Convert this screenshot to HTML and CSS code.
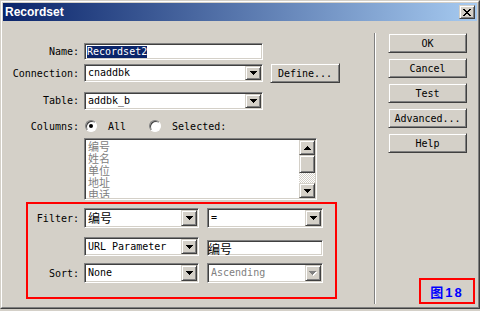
FILE: index.html
```html
<!DOCTYPE html>
<html lang="zh">

<head>
    <meta charset="UTF-8">
    <title>Recordset</title>
    <link rel="stylesheet" href="styles.css">
</head>

<body>
    <div class="window">
        <div class="window-inner">
            <div class="titlebar">
                <span class="title">Recordset</span>
                <span class="close raised">
                    <svg width="8" height="7" viewBox="0 0 8 7" shape-rendering="crispEdges">
                        <path d="M0 0h2v1H0zM6 0h2v1H6zM1 1h2v1H1zM5 1h2v1H5zM2 2h4v1H2zM3 3h2v1H3zM2 4h4v1H2zM1 5h2v1H1zM5 5h2v1H5zM0 6h2v1H0zM6 6h2v1H6z" fill="#000" />
                    </svg>
                </span>
            </div>

            <div class="body">
                <div class="form">
                    <div class="row row-name">
                        <label class="lbl">Name:</label>
                        <div class="field w-name"><span class="selected">Recordset2</span></div>
                    </div>

                    <div class="row row-conn">
                        <label class="lbl">Connection:</label>
                        <div class="combo w-wide">
                            <span class="val">cnaddbk</span>
                            <span class="drop raised"><svg width="7" height="4" viewBox="0 0 7 4" shape-rendering="crispEdges"><path d="M0 0h7v1H0zM1 1h5v1H1zM2 2h3v1H2zM3 3h1v1H3z" fill="#000" /></svg></span>
                        </div>
                        <div class="btn raised define">Define...</div>
                    </div>

                    <div class="row row-table">
                        <label class="lbl">Table:</label>
                        <div class="combo w-wide">
                            <span class="val">addbk_b</span>
                            <span class="drop raised"><svg width="7" height="4" viewBox="0 0 7 4" shape-rendering="crispEdges"><path d="M0 0h7v1H0zM1 1h5v1H1zM2 2h3v1H2zM3 3h1v1H3z" fill="#000" /></svg></span>
                        </div>
                    </div>

                    <div class="row row-cols">
                        <label class="lbl">Columns:</label>
                        <span class="radio checked"></span>
                        <span class="radio-text all">All</span>
                        <span class="radio second"></span>
                        <span class="radio-text">Selected:</span>
                    </div>

                    <div class="listbox">
                        <div class="items">
                            <div>编号</div>
                            <div>姓名</div>
                            <div>单位</div>
                            <div>地址</div>
                            <div>电话</div>
                        </div>
                        <div class="scroll">
                            <span class="sb-btn raised up"><svg width="7" height="4" viewBox="0 0 7 4" shape-rendering="crispEdges"><path d="M3 0h1v1H3zM2 1h3v1H2zM1 2h5v1H1zM0 3h7v1H0z" fill="#000" /></svg></span>
                            <span class="thumb raised"></span>
                            <span class="track"></span>
                            <span class="sb-btn raised down"><svg width="7" height="4" viewBox="0 0 7 4" shape-rendering="crispEdges"><path d="M0 0h7v1H0zM1 1h5v1H1zM2 2h3v1H2zM3 3h1v1H3z" fill="#000" /></svg></span>
                        </div>
                    </div>

                    <div class="filter-box">
                        <div class="row f-row1">
                            <label class="lbl small">Filter:</label>
                            <div class="combo w-half">
                                <span class="val cjk">编号</span>
                                <span class="drop raised"><svg width="7" height="4" viewBox="0 0 7 4" shape-rendering="crispEdges"><path d="M0 0h7v1H0zM1 1h5v1H1zM2 2h3v1H2zM3 3h1v1H3z" fill="#000" /></svg></span>
                            </div>
                            <div class="combo w-half2">
                                <span class="val">=</span>
                                <span class="drop raised"><svg width="7" height="4" viewBox="0 0 7 4" shape-rendering="crispEdges"><path d="M0 0h7v1H0zM1 1h5v1H1zM2 2h3v1H2zM3 3h1v1H3z" fill="#000" /></svg></span>
                            </div>
                        </div>

                        <div class="row f-row2">
                            <span class="lbl small"></span>
                            <div class="combo w-half">
                                <span class="val">URL Parameter</span>
                                <span class="drop raised"><svg width="7" height="4" viewBox="0 0 7 4" shape-rendering="crispEdges"><path d="M0 0h7v1H0zM1 1h5v1H1zM2 2h3v1H2zM3 3h1v1H3z" fill="#000" /></svg></span>
                            </div>
                            <div class="field w-half2 param"><span class="cjk">编号</span></div>
                        </div>

                        <div class="row f-row3">
                            <label class="lbl small">Sort:</label>
                            <div class="combo w-half">
                                <span class="val">None</span>
                                <span class="drop raised"><svg width="7" height="4" viewBox="0 0 7 4" shape-rendering="crispEdges"><path d="M0 0h7v1H0zM1 1h5v1H1zM2 2h3v1H2zM3 3h1v1H3z" fill="#000" /></svg></span>
                            </div>
                            <div class="combo w-half2 disabled">
                                <span class="val">Ascending</span>
                                <span class="drop raised"><svg width="8" height="5" viewBox="0 0 8 5" shape-rendering="crispEdges"><path d="M1 1h7v1H1zM2 2h5v1H2zM3 3h3v1H3zM4 4h1v1H4z" fill="#fff" /><path d="M0 0h7v1H0zM1 1h5v1H1zM2 2h3v1H2zM3 3h1v1H3z" fill="#808080" /></svg></span>
                            </div>
                        </div>
                    </div>
                </div>

                <div class="sep"></div>

                <div class="side">
                    <div class="btn raised">OK</div>
                    <div class="btn raised">Cancel</div>
                    <div class="btn raised">Test</div>
                    <div class="btn raised">Advanced...</div>
                    <div class="btn raised">Help</div>
                    <div class="fig">图18</div>
                </div>
            </div>
        </div>
    </div>
</body>

</html>
```

FILE: styles.css
```css
* {
    margin: 0;
    padding: 0;
    box-sizing: border-box;
}

body {
    background-color: #d4d0c8;
    font-family: "DejaVu Sans Mono", "Liberation Mono", monospace;
    font-size: 10px;
    color: #000;
}

.window {
    width: 480px;
    height: 309px;
    border: 1px solid;
    border-color: #d4d0c8 #404040 #404040 #d4d0c8;
}

.window-inner {
    height: 100%;
    border: 1px solid;
    border-color: #fff #808080 #808080 #fff;
    padding: 1px;
    display: flex;
    flex-direction: column;
}

.titlebar {
    height: 18px;
    background: linear-gradient(to right, #0a246a, #a6caf0);
    display: flex;
    align-items: center;
    justify-content: space-between;
    padding: 0 2px;
}

.title {
    color: #fff;
    font: bold 12px "Liberation Sans", Arial, sans-serif;
}

.raised {
    background-color: #d4d0c8;
    border: 1px solid;
    border-color: #d4d0c8 #404040 #404040 #d4d0c8;
    box-shadow: inset 1px 1px #fff, inset -1px -1px #808080;
}

.close {
    width: 16px;
    height: 14px;
    display: flex;
    align-items: center;
    justify-content: center;
}

.body {
    flex: 1;
    display: flex;
}

.form {
    width: 371px;
    display: flex;
    flex-direction: column;
}

.row {
    display: flex;
    align-items: center;
}

.lbl {
    width: 76px;
    flex-shrink: 0;
    text-align: right;
    margin-right: 5px;
}

.lbl.small {
    width: 51px;
}

/* sunken text box */
.field {
    height: 17px;
    background-color: #fff;
    border: 1px solid;
    border-color: #808080 #fff #fff #808080;
    box-shadow: inset 1px 1px #404040, inset -1px -1px #d4d0c8;
    padding: 1px 1px 1px 2px;
    display: flex;
    align-items: center;
}

.selected {
    background-color: #0a246a;
    color: #fff;
    line-height: 12px;
}

.combo {
    height: 18px;
    background-color: #fff;
    border: 1px solid;
    border-color: #808080 #fff #fff #808080;
    box-shadow: inset 1px 1px #404040, inset -1px -1px #d4d0c8;
    padding: 1px;
    display: flex;
    align-items: center;
}

.combo .val {
    flex: 1;
    padding-left: 2px;
    line-height: 14px;
    white-space: nowrap;
    overflow: hidden;
}

.drop {
    width: 16px;
    height: 100%;
    display: flex;
    align-items: center;
    justify-content: center;
}

.cjk {
    font-family: "Noto Sans CJK SC", sans-serif;
    font-size: 12px;
}

.combo .val.cjk {
    line-height: 16px;
}

.w-name {
    width: 179px;
}

.w-wide {
    width: 179px;
}

.w-half {
    width: 115px;
    height: 20px;
}

.w-half2 {
    width: 116px;
    height: 20px;
    margin-left: 8px;
}

.row-name {
    margin-top: 22px;
    height: 17px;
}

.row-conn {
    margin-top: 3px;
    height: 20px;
}

.btn {
    height: 20px;
    display: flex;
    align-items: center;
    justify-content: center;
}

.define {
    width: 70px;
    margin-left: 7px;
}

.row-table {
    margin-top: 8px;
    height: 19px;
}

.row-cols {
    margin-top: 9px;
    height: 14px;
}

.radio {
    width: 12px;
    height: 12px;
    border-radius: 50%;
    background-color: #fff;
    border: 1px solid;
    border-color: #808080 #fff #fff #808080;
    box-shadow: inset 1px 1px #404040;
    position: relative;
    margin-left: 1px;
}

.radio.checked::after {
    content: "";
    position: absolute;
    left: 3px;
    top: 3px;
    width: 4px;
    height: 4px;
    border-radius: 50%;
    background-color: #000;
}

.radio-text {
    margin-left: 11px;
}

.radio.second {
    margin-left: 23px;
}

.listbox {
    margin-top: 5px;
    margin-left: 81px;
    width: 233px;
    height: 62px;
    background-color: #fff;
    border: 1px solid;
    border-color: #808080 #fff #fff #808080;
    box-shadow: inset 1px 1px #404040, inset -1px -1px #d4d0c8;
    padding: 1px;
    display: flex;
}

.items {
    flex: 1;
    overflow: hidden;
    padding-left: 2px;
    color: #808080;
    font-family: "Noto Sans CJK SC", sans-serif;
    font-size: 11px;
    line-height: 12px;
}

.scroll {
    width: 16px;
    display: flex;
    flex-direction: column;
}

.sb-btn {
    height: 15px;
    display: flex;
    align-items: center;
    justify-content: center;
}

.thumb {
    height: 18px;
}

.track {
    flex: 1;
    background: repeating-conic-gradient(#fff 0 25%, #d4d0c8 0 50%) 0 0 / 2px 2px;
}

.filter-box {
    margin-top: 2px;
    margin-left: 23px;
    width: 311px;
    height: 97px;
    border: 2px solid #ff0000;
}

.f-row1 {
    margin-top: 4px;
    height: 20px;
}

.f-row2 {
    margin-top: 9px;
    height: 19px;
    align-items: flex-end;
}

.f-row2 .combo {
    height: 19px;
}

.param {
    height: 16px;
    padding-left: 0;
}

.f-row3 {
    margin-top: 7px;
    height: 20px;
}

.disabled {
    color: #808080;
}

.sep {
    width: 2px;
    margin-top: 12px;
    height: 271px;
    border-left: 1px solid #808080;
    border-right: 1px solid #fff;
}

.side {
    padding: 12px 0 2px 12px;
    display: flex;
    flex-direction: column;
    flex: 1;
}

.side .btn {
    width: 79px;
    margin-bottom: 5px;
}

.fig {
    margin-top: auto;
    margin-left: 31px;
    width: 56px;
    height: 26px;
    border: 2px solid #ff0000;
    color: #0000ff;
    font: bold 13px "Liberation Sans", "Noto Sans CJK SC", sans-serif;
    letter-spacing: 2px;
    display: flex;
    align-items: center;
    justify-content: center;
}
```
